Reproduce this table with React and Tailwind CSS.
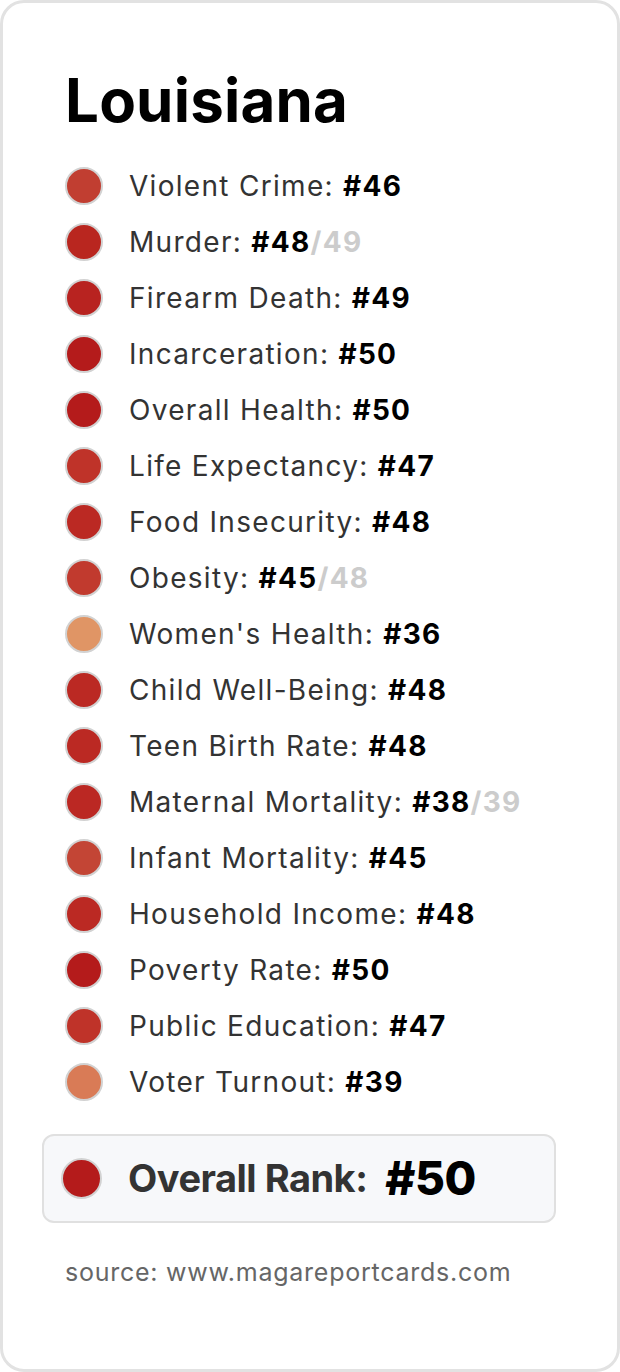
import React from 'react';

const rows = [
  { label: 'Violent Crime', rank: 46, color: '#c13e31' },
  { label: 'Murder', rank: 48, of: 49, color: '#b9261f' },
  { label: 'Firearm Death', rank: 49, color: '#b82320' },
  { label: 'Incarceration', rank: 50, color: '#b41b1b' },
  { label: 'Overall Health', rank: 50, color: '#b41b1b' },
  { label: 'Life Expectancy', rank: 47, color: '#bf3329' },
  { label: 'Food Insecurity', rank: 48, color: '#bb2923' },
  { label: 'Obesity', rank: 45, of: 48, color: '#c13a2e' },
  { label: "Women's Health", rank: 36, color: '#e09565' },
  { label: 'Child Well-Being', rank: 48, color: '#bb2923' },
  { label: 'Teen Birth Rate', rank: 48, color: '#bb2923' },
  { label: 'Maternal Mortality', rank: 38, of: 39, color: '#bb2823' },
  { label: 'Infant Mortality', rank: 45, color: '#c34535' },
  { label: 'Household Income', rank: 48, color: '#bb2923' },
  { label: 'Poverty Rate', rank: 50, color: '#b41b1b' },
  { label: 'Public Education', rank: 47, color: '#bf3329' },
  { label: 'Voter Turnout', rank: 39, color: '#d97b56' },
];

const Dot = ({ color, size = 'w-[38px] h-[38px]' }) => (
  <span
    className={`${size} shrink-0 rounded-full border-2 border-[#d2d2d2]`}
    style={{ backgroundColor: color }}
  />
);

export default function App() {
  return (
    <div className="w-[620px] h-[1372px] bg-white font-['Inter','Liberation_Sans',sans-serif]">
      <div className="h-full rounded-[24px] border-[3px] border-[#e2e2e2] bg-white pl-[39px] pt-[67px]">
        <h1 className="ml-[23px] text-[60px] font-bold leading-none tracking-[0.2px] text-black">Louisiana</h1>

        <ul className="ml-[23px] mt-[28px] flex flex-col">
          {rows.map((r) => (
            <li key={r.label} className="flex h-[56px] items-center gap-[26px]">
              <Dot color={r.color} />
              <span className="text-[28px] tracking-[1.3px] text-[#333333]">
                {r.label}: <b className="font-bold text-black">#{r.rank}</b>
                {r.of && <b className="font-bold text-[#cccccc]">/{r.of}</b>}
              </span>
            </li>
          ))}
        </ul>

        <div className="mt-[24px] flex h-[89px] w-[514px] items-center rounded-[12px] border-2 border-[#e0e0e0] bg-[#f7f8fa] pl-[17px]">
          <Dot color="#b41b1b" size="w-[41px] h-[41px]" />
          <span className="ml-[26px] text-[38px] font-bold tracking-[-0.5px] text-[#333333]">Overall Rank:</span>
          <span className="ml-[18px] text-[46px] font-extrabold tracking-[-0.5px] text-black">#50</span>
        </div>

        <p className="ml-[23px] mt-[34px] text-[25px] leading-[30px] tracking-[0.75px] text-[#666666]">source: www.magareportcards.com</p>
      </div>
    </div>
  );
}
